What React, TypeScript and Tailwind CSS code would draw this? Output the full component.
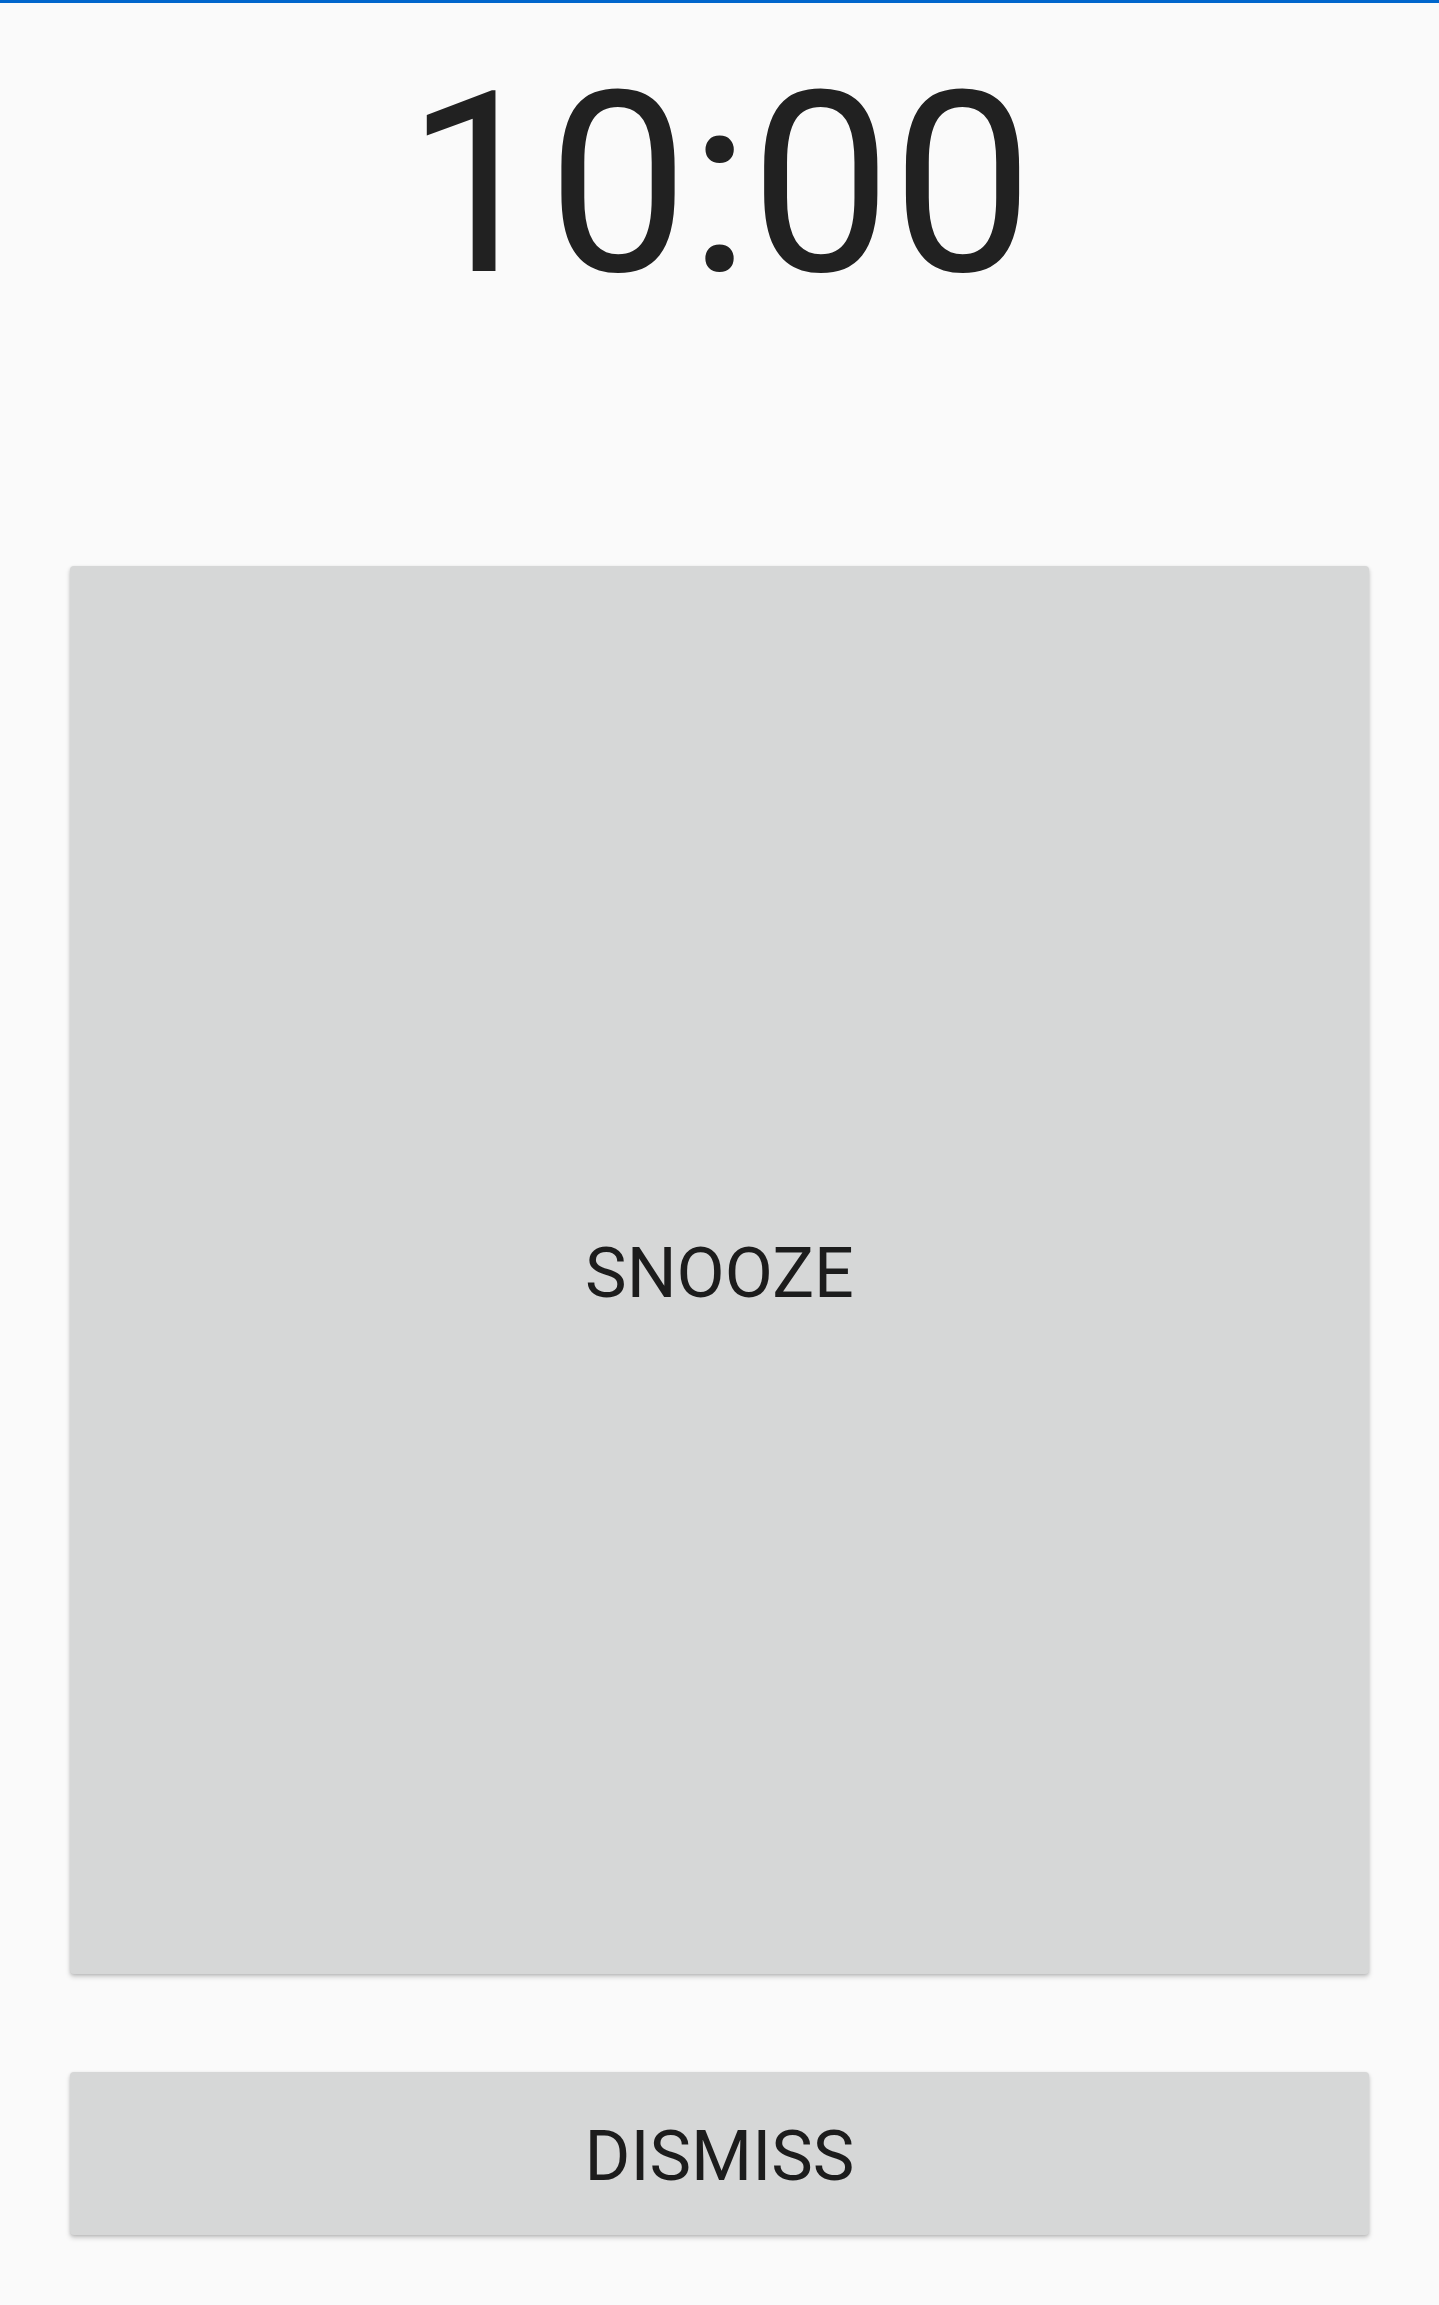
import React from 'react';

export default function App() {
  return (
    <div className="flex min-h-[2305px] w-full flex-col bg-[#fafafa] font-['Roboto','Liberation_Sans',sans-serif] text-[#212121]">
      <div className="h-[3px] w-full bg-[#0066cc]" />

      <div className="mt-[56px] text-center text-[252px] leading-none font-normal">10:00</div>

      <div className="mx-[70px] mt-[255px] flex flex-col gap-[98px]">
        <button className="flex h-[1408px] w-full items-center justify-center rounded-[4px] bg-[#d6d7d7] pt-[6px] text-[70px] text-[#1c1c1c] shadow-[0_3px_5px_rgba(0,0,0,0.18),0_1px_3px_rgba(0,0,0,0.12)]">
          SNOOZE
        </button>
        <button className="flex h-[163px] w-full items-center justify-center rounded-[4px] bg-[#d6d7d7] pt-[6px] text-[70px] text-[#1c1c1c] shadow-[0_3px_5px_rgba(0,0,0,0.18),0_1px_3px_rgba(0,0,0,0.12)]">
          DISMISS
        </button>
      </div>
    </div>
  );
}
